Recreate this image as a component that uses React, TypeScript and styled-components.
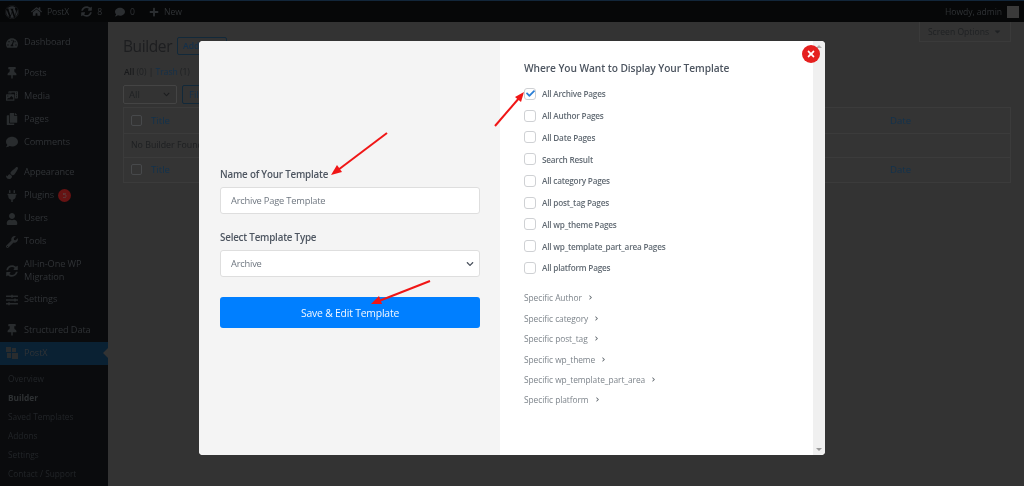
import React from "react";
import styled, { createGlobalStyle } from "styled-components";
import {
  FaWordpress, FaHome, FaSyncAlt, FaComment, FaPlus, FaTachometerAlt, FaThumbtack,
  FaPhotoVideo, FaCopy, FaPaintBrush, FaPlug, FaUser, FaWrench, FaSlidersH, FaTimes,
  FaChevronDown, FaChevronRight, FaCheck, FaCaretDown, FaSyncAlt as FaMigrate,
} from "react-icons/fa";

const GlobalStyle = createGlobalStyle`
  html, body { margin: 0; padding: 0; height: 100%; background: #333333; overflow: hidden; }
  * { box-sizing: border-box; }
`;

const Page = styled.div`
  width: 1024px;
  height: 486px;
  position: relative;
  overflow: hidden;
  background: #333333;
  font-family: "Open Sans", "Noto Sans", sans-serif;
  filter: blur(0.4px);
`;

const AdminBar = styled.header`
  height: 22px;
  background: #060708;
  border-top: 1px solid #12263a;
  display: flex;
  align-items: center;
  padding: 0 5px 0 5px;
  color: #303336;
  font-size: 8.6px;
  letter-spacing: -0.05px;
`;

const BarItem = styled.span<{ $gap?: number }>`
  display: flex;
  align-items: center;
  gap: 5px;
  margin-right: ${(p) => p.$gap ?? 13}px;
  svg { color: #2b2e31; }
`;

const Spacer = styled.div`
  flex: 1;
`;

const Avatar = styled.span`
  width: 12px;
  height: 12px;
  background: #3a3a3a;
  margin-left: 5px;
`;

const Body = styled.div`
  display: flex;
  height: 464px;
`;

const Sidebar = styled.nav`
  width: 108px;
  flex: none;
  background: #0a0b0d;
  padding-top: 9px;
  position: relative;
`;

const MenuItem = styled.div<{ $active?: boolean; $sep?: boolean; $tall?: boolean }>`
  height: ${(p) => (p.$tall ? 35 : 23)}px;
  margin-top: ${(p) => (p.$sep ? 7.5 : 0)}px;
  display: flex;
  align-items: center;
  padding-left: 6px;
  gap: 6px;
  font-size: 9.2px;
  letter-spacing: -0.1px;
  line-height: 12.5px;
  color: #303336;
  background: ${(p) => (p.$active ? "#0a2133" : "transparent")};
  position: relative;
  svg { flex: none; width: 12px; height: 12px; color: #292c2e; }
`;

const Badge = styled.span`
  width: 13px;
  height: 13px;
  border-radius: 50%;
  background: #661313;
  color: #5a4a4a;
  font-size: 7.5px;
  display: inline-flex;
  align-items: center;
  justify-content: center;
  margin-left: 4px;
  vertical-align: middle;
`;

const Notch = styled.span`
  position: absolute;
  right: 0;
  top: 6px;
  border-style: solid;
  border-width: 5px 5px 5px 0;
  border-color: transparent #333333 transparent transparent;
`;

const SubMenu = styled.div`
  padding-top: 4.5px;
  display: flex;
  flex-direction: column;
`;

const SubItem = styled.div<{ $bold?: boolean }>`
  height: 19px;
  padding-left: 8px;
  font-size: 8.3px;
  line-height: 19px;
  white-space: nowrap;
  color: ${(p) => (p.$bold ? "#2e3133" : "#222528")};
  font-weight: ${(p) => (p.$bold ? 700 : 400)};
`;

const Content = styled.main`
  flex: 1;
  padding: 0 13px 0 15px;
  position: relative;
  color: #1f2022;
`;

const ScreenOptions = styled.div`
  position: absolute;
  top: 0;
  right: 13px;
  width: 92px;
  height: 20px;
  border: 1px solid #3a3a3a;
  border-top: none;
  font-size: 8.6px;
  color: #1f2123;
  display: flex;
  align-items: center;
  justify-content: center;
  gap: 4px;
`;

const HeadRow = styled.div`
  display: flex;
  align-items: center;
  gap: 5px;
  height: 44px;
  padding-top: 3px;
`;

const Title = styled.h1`
  margin: 0;
  font-size: 15.5px;
  letter-spacing: -0.4px;
  font-weight: 400;
  color: #1d1e20;
`;

const AddBtn = styled.span`
  border: 1px solid #12293a;
  border-radius: 2px;
  padding: 0 5px;
  height: 18px;
  width: 50px;
  font-size: 8.6px;
  line-height: 16px;
  font-weight: 600;
  color: #14304a;
  white-space: nowrap;
  overflow: hidden;
`;

const Tabs = styled.div`
  font-size: 8.5px;
  height: 19px;
  line-height: 12px;
  margin-left: 1px;
  color: #1f2123;
  b { color: #18191b; font-weight: 600; }
  a { color: #14304a; }
`;

const FilterRow = styled.div`
  display: flex;
  gap: 5px;
  height: 22px;
`;

const Drop = styled.div`
  width: 54px;
  height: 19px;
  border: 1px solid #444;
  border-radius: 2px;
  font-size: 9.5px;
  color: #1f2123;
  display: flex;
  align-items: center;
  justify-content: space-between;
  padding: 0 6px 0 5px;
  svg { color: #1c1d1f; }
`;

const FilterBtn = styled.span`
  width: 40px;
  height: 19px;
  border: 1px solid #12293a;
  border-radius: 2px;
  color: #14304a;
  font-size: 9.5px;
  padding: 2px 6px;
`;

const Table = styled.div`
  border: 1px solid #3b3b3b;
  background: #343434;
`;

const Row = styled.div<{ $line?: boolean }>`
  height: 24.5px;
  display: flex;
  align-items: center;
  padding: 0 7px;
  border-top: ${(p) => (p.$line ? "1px solid #3b3b3b" : "none")};
  color: #1d1f21;
  font-size: 8.8px;
`;

const TableCheck = styled.span`
  width: 11px;
  height: 11px;
  border: 1px solid #47494b;
  border-radius: 2px;
  margin-right: 9px;
`;

const ColTitle = styled.span`
  color: #12324d;
  font-size: 9.6px;
  flex: 1;
`;

const ColDate = styled.span`
  color: #12324d;
  font-size: 9.6px;
  width: 113px;
`;

const Backdrop = styled.div`
  position: absolute;
  left: 199px;
  top: 41px;
  width: 626px;
  height: 414px;
  display: grid;
  grid-template-columns: 301px 1fr 12px;
  background: #fff;
  border-radius: 4px;
  overflow: hidden;
`;

const LeftPane = styled.section`
  background: #f4f4f4;
  padding: 126px 20px 0 21px;
`;

const FieldLabel = styled.label`
  display: block;
  font-size: 9.8px;
  letter-spacing: -0.2px;
  line-height: 15px;
  font-weight: 600;
  color: #4d5560;
  margin-bottom: 5px;
`;

const Field = styled.div`
  height: 27px;
  width: 260px;
  background: #fff;
  border: 1px solid #dedede;
  border-radius: 3px;
  display: flex;
  align-items: center;
  justify-content: space-between;
  padding: 0 5px 0 10px;
  font-size: 9.3px;
  letter-spacing: -0.2px;
  color: #6f7780;
  margin-bottom: 16px;
  svg { color: #4d5560; width: 8px; height: 8px; }
`;

const SaveButton = styled.button`
  display: block;
  width: 260px;
  height: 31px;
  margin-top: 20px;
  border: none;
  border-radius: 3px;
  background: #007fff;
  color: #f2f8ff;
  font-family: inherit;
  font-size: 10.4px;
  letter-spacing: -0.2px;
  font-weight: 500;
  padding: 0;
`;

const RightPane = styled.section`
  padding: 20px 24px 0 24px;
`;

const PaneTitle = styled.h2`
  margin: 0 0 7px;
  font-size: 10.2px;
  letter-spacing: -0.08px;
  line-height: 15px;
  font-weight: 600;
  color: #4d5560;
  white-space: nowrap;
`;

const CheckRow = styled.div`
  height: 21.75px;
  display: flex;
  align-items: center;
  gap: 6px;
  font-size: 8.2px;
  letter-spacing: -0.2px;
  font-weight: 600;
  color: #616a73;
`;

const CheckBox = styled.span`
  width: 12px;
  height: 12px;
  border: 1px solid #cfd1d4;
  border-radius: 3px;
  background: #fff;
  display: inline-flex;
  align-items: center;
  justify-content: center;
  svg { width: 9px; height: 9px; color: #2b7fd6; }
`;

const SpecificList = styled.div`
  margin-top: 9px;
  display: flex;
  flex-direction: column;
`;

const SpecificRow = styled.div`
  height: 20.4px;
  display: flex;
  align-items: center;
  gap: 6px;
  font-size: 8.4px;
  letter-spacing: -0.06px;
  color: #7d848b;
  white-space: nowrap;
  svg { width: 5px; height: 5px; color: #5f666d; }
`;

const ScrollBar = styled.div`
  background: #f0f0f0;
  position: relative;
`;

const ScrollArrow = styled.span<{ $down?: boolean }>`
  position: absolute;
  left: 3px;
  ${(p) => (p.$down ? "bottom: 4px;" : "top: 4px;")}
  border-style: solid;
  border-width: ${(p) => (p.$down ? "3px 3px 0 3px" : "0 3px 3px 3px")};
  border-color: ${(p) => (p.$down ? "#9a9a9a" : "#b0b0b0")} transparent;
`;

const CloseButton = styled.span`
  position: absolute;
  left: 802px;
  top: 45px;
  width: 18px;
  height: 18px;
  border-radius: 50%;
  background: #e5201f;
  display: flex;
  align-items: center;
  justify-content: center;
  color: #fff;
  svg { width: 10px; height: 10px; }
`;

const ArrowLayer = styled.svg`
  position: absolute;
  inset: 0;
  width: 1024px;
  height: 486px;
  pointer-events: none;
`;

const Arrow = ({ d, head }: { d: string; head: string }) => (
  <>
    <path d={d} stroke="#f01616" strokeWidth="2" fill="none" />
    <polygon points={head} fill="#f01616" />
  </>
);

const PostxIcon = () => (
  <svg viewBox="0 0 12 12" fill="currentColor">
    <rect x="0" y="0" width="5" height="5" />
    <rect x="6" y="1" width="4" height="4" />
    <rect x="1" y="6" width="4" height="5" />
    <rect x="6" y="6" width="6" height="6" />
  </svg>
);

const mainMenu: { label: string; icon: React.ReactNode; sep?: boolean; tall?: boolean }[] = [
  { label: "Dashboard", icon: <FaTachometerAlt /> },
  { label: "Posts", icon: <FaThumbtack />, sep: true },
  { label: "Media", icon: <FaPhotoVideo /> },
  { label: "Pages", icon: <FaCopy /> },
  { label: "Comments", icon: <FaComment /> },
  { label: "Appearance", icon: <FaPaintBrush />, sep: true },
  { label: "Plugins", icon: <FaPlug /> },
  { label: "Users", icon: <FaUser /> },
  { label: "Tools", icon: <FaWrench /> },
  { label: "All-in-One WP Migration", icon: <FaMigrate />, tall: true },
  { label: "Settings", icon: <FaSlidersH /> },
  { label: "Structured Data", icon: <FaThumbtack />, sep: true },
];

const subMenu = ["Overview", "Builder", "Saved Templates", "Addons", "Settings", "Contact / Support"];

const pageTypes = [
  "All Archive Pages", "All Author Pages", "All Date Pages", "Search Result", "All category Pages",
  "All post_tag Pages", "All wp_theme Pages", "All wp_template_part_area Pages", "All platform Pages",
];

const specifics = ["Author", "category", "post_tag", "wp_theme", "wp_template_part_area", "platform"];

export default function App() {
  return (
    <Page>
      <GlobalStyle />
      <AdminBar>
        <BarItem $gap={12}><FaWordpress size={14} /></BarItem>
        <BarItem $gap={12}><FaHome size={11} />PostX</BarItem>
        <BarItem><FaSyncAlt size={11} />8</BarItem>
        <BarItem $gap={14}><FaComment size={10} />0</BarItem>
        <BarItem><FaPlus size={10} />New</BarItem>
        <Spacer />
        Howdy, admin
        <Avatar />
      </AdminBar>
      <Body>
        <Sidebar>
          {mainMenu.map((m) => (
            <MenuItem key={m.label} $sep={m.sep} $tall={m.tall}>
              {m.icon}
              <span>
                {m.label}
                {m.label === "Plugins" && <Badge>5</Badge>}
              </span>
            </MenuItem>
          ))}
          <MenuItem $active>
            <PostxIcon />
            PostX
            <Notch />
          </MenuItem>
          <SubMenu>
            {subMenu.map((s) => (
              <SubItem key={s} $bold={s === "Builder"}>{s}</SubItem>
            ))}
          </SubMenu>
        </Sidebar>
        <Content>
          <ScreenOptions>Screen Options <FaCaretDown size={9} /></ScreenOptions>
          <HeadRow>
            <Title>Builder</Title>
            <AddBtn>Add New</AddBtn>
          </HeadRow>
          <Tabs><b>All</b> (0) | <a>Trash</a> (1)</Tabs>
          <FilterRow>
            <Drop>All <FaChevronDown size={7} /></Drop>
            <FilterBtn>Filter</FilterBtn>
          </FilterRow>
          <Table>
            <Row><TableCheck /><ColTitle>Title</ColTitle><ColDate>Date</ColDate></Row>
            <Row $line>No Builder Found</Row>
            <Row $line><TableCheck /><ColTitle>Title</ColTitle><ColDate>Date</ColDate></Row>
          </Table>
        </Content>
      </Body>

      <Backdrop>
        <LeftPane>
          <FieldLabel>Name of Your Template</FieldLabel>
          <Field>Archive Page Template</Field>
          <FieldLabel>Select Template Type</FieldLabel>
          <Field>Archive <FaChevronDown /></Field>
          <SaveButton>Save &amp; Edit Template</SaveButton>
        </LeftPane>
        <RightPane>
          <PaneTitle>Where You Want to Display Your Template</PaneTitle>
          {pageTypes.map((t, i) => (
            <CheckRow key={t}>
              <CheckBox>{i === 0 && <FaCheck />}</CheckBox>
              {t}
            </CheckRow>
          ))}
          <SpecificList>
            {specifics.map((s) => (
              <SpecificRow key={s}>Specific {s} <FaChevronRight /></SpecificRow>
            ))}
          </SpecificList>
        </RightPane>
        <ScrollBar>
          <ScrollArrow />
          <ScrollArrow $down />
        </ScrollBar>
      </Backdrop>
      <CloseButton><FaTimes /></CloseButton>

      <ArrowLayer viewBox="0 0 1024 486">
        <Arrow d="M387 133 L338 170" head="331,175 342,172 337,165" />
        <Arrow d="M430 281 L379 301" head="371,304 382,304 379,296" />
        <Arrow d="M495 126 L520 97" head="524,92 515,97 521,102" />
      </ArrowLayer>
    </Page>
  );
}
